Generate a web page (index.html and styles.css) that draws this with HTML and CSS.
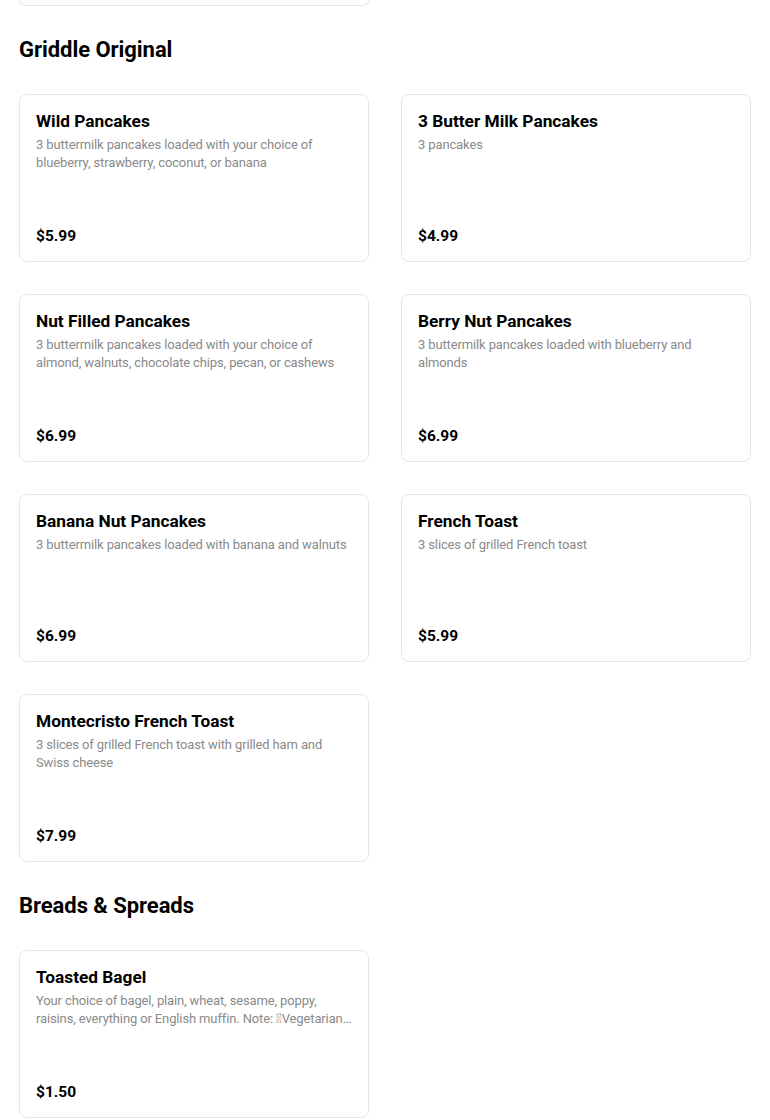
FILE: index.html
```html
<!DOCTYPE html>
<html lang="en">
<head>
<meta charset="utf-8">
<title>Menu</title>
<link rel="stylesheet" href="styles.css">
</head>
<body>
<main class="menu">
  <div class="card-tail"></div>

  <section class="section">
    <h2 class="section-title">Griddle Original</h2>
    <div class="grid">
      <article class="card">
        <h3 class="card-title">Wild Pancakes</h3>
        <p class="card-desc">3 buttermilk pancakes loaded with your choice of blueberry, strawberry, coconut, or banana</p>
        <div class="card-price">$5.99</div>
      </article>
      <article class="card">
        <h3 class="card-title">3 Butter Milk Pancakes</h3>
        <p class="card-desc">3 pancakes</p>
        <div class="card-price">$4.99</div>
      </article>
      <article class="card">
        <h3 class="card-title">Nut Filled Pancakes</h3>
        <p class="card-desc">3 buttermilk pancakes loaded with your choice of almond, walnuts, chocolate chips, pecan, or cashews</p>
        <div class="card-price">$6.99</div>
      </article>
      <article class="card">
        <h3 class="card-title">Berry Nut Pancakes</h3>
        <p class="card-desc">3 buttermilk pancakes loaded with blueberry and almonds</p>
        <div class="card-price">$6.99</div>
      </article>
      <article class="card">
        <h3 class="card-title">Banana Nut Pancakes</h3>
        <p class="card-desc">3 buttermilk pancakes loaded with banana and walnuts</p>
        <div class="card-price">$6.99</div>
      </article>
      <article class="card">
        <h3 class="card-title">French Toast</h3>
        <p class="card-desc">3 slices of grilled French toast</p>
        <div class="card-price">$5.99</div>
      </article>
      <article class="card">
        <h3 class="card-title">Montecristo French Toast</h3>
        <p class="card-desc">3 slices of grilled French toast with grilled ham and Swiss cheese</p>
        <div class="card-price">$7.99</div>
      </article>
    </div>
  </section>

  <section class="section">
    <h2 class="section-title">Breads &amp; Spreads</h2>
    <div class="grid">
      <article class="card">
        <h3 class="card-title">Toasted Bagel</h3>
        <p class="card-desc">Your choice of bagel, plain, wheat, sesame, poppy, raisins, everything or English muffin. Note: &#xE000;Vegetarian option, served with cream cheese or butter and jelly</p>
        <div class="card-price">$1.50</div>
      </article>
    </div>
  </section>
</main>
</body>
</html>
```

FILE: styles.css
```css
* {
  box-sizing: border-box;
}

html, body {
  margin: 0;
  padding: 0;
  background: #ffffff;
}

body {
  font-family: Roboto, "Liberation Sans", Arial, sans-serif;
  color: #000000;
}

.menu {
  padding: 0 19px;
}

.card-tail {
  width: 350px;
  height: 6px;
  border: 1px solid #e6e6e6;
  border-top: none;
  border-radius: 0 0 8px 8px;
}

.section {
  display: flex;
  flex-direction: column;
}

.section-title {
  margin: 30px 0 30px;
  font-size: 22px;
  line-height: 28px;
  font-weight: 700;
  letter-spacing: -0.05px;
}

.grid {
  display: grid;
  grid-template-columns: 350px 350px;
  column-gap: 32px;
  row-gap: 32px;
}

.card {
  height: 168px;
  border: 1px solid #e6e6e6;
  border-radius: 8px;
  padding: 16px 16px 15px;
  display: flex;
  flex-direction: column;
}

.card-title {
  margin: 0;
  font-size: 17.3px;
  line-height: 20px;
  font-weight: 700;
}

.card-desc {
  margin: 5px 0 0;
  font-size: 13px;
  line-height: 18px;
  letter-spacing: -0.13px;
  color: #8a8a8a;
  display: -webkit-box;
  -webkit-line-clamp: 2;
  -webkit-box-orient: vertical;
  overflow: hidden;
}

.card-price {
  margin-top: auto;
  font-size: 15.5px;
  line-height: 20px;
  font-weight: 700;
}
```
